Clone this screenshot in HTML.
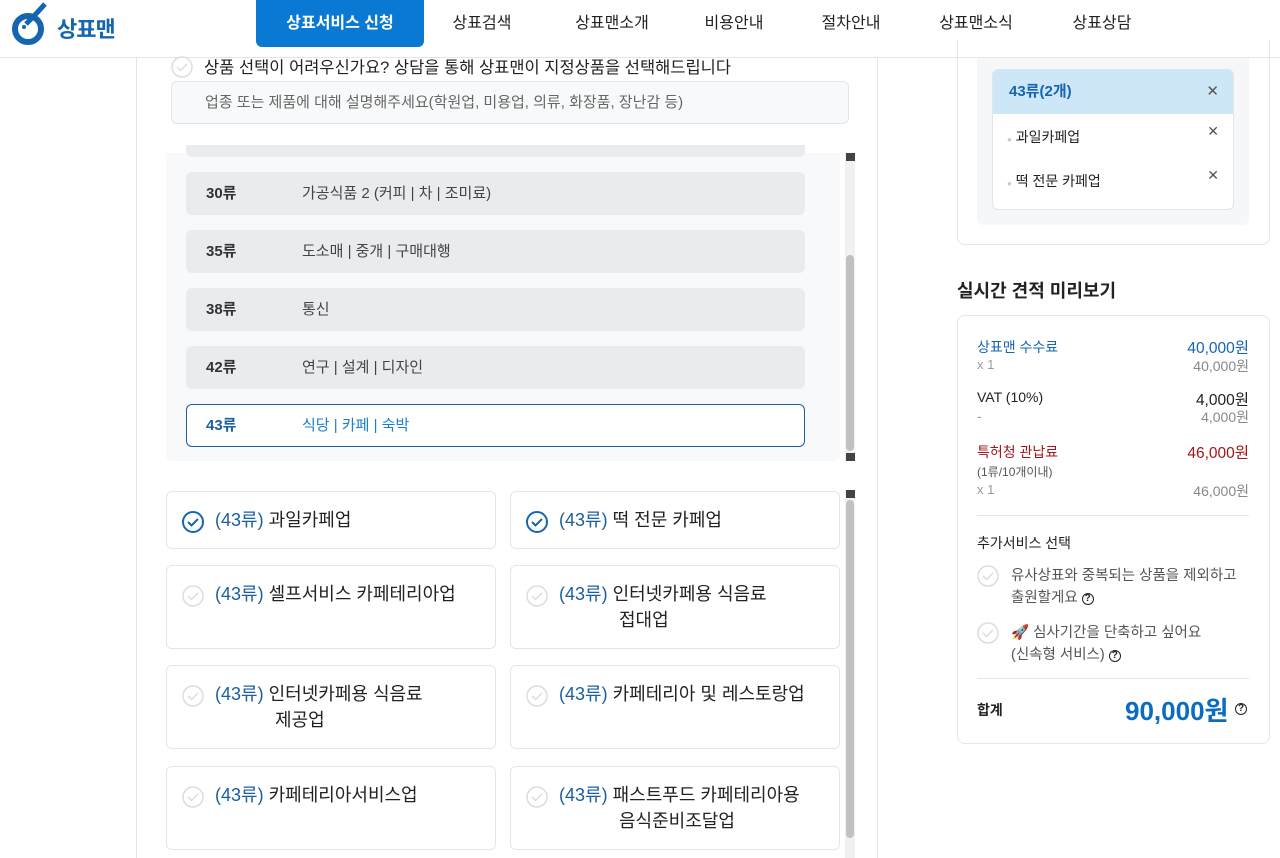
<!DOCTYPE html>
<html><head><meta charset="utf-8"><style>
*{margin:0;padding:0;box-sizing:border-box}
body{width:1280px;height:858px;overflow:hidden;background:#fff;font-family:"Liberation Sans","Noto Sans CJK KR",sans-serif;color:#222;position:relative}
.a{position:absolute}
.hdr{left:0;top:0;width:1280px;height:58px;border-bottom:1px solid #e6e6e6;background:#fff}
.nav{top:0;height:47px;line-height:47px;font-size:16px;color:#222;text-align:center}
.row{left:186px;width:619px;height:43px;border-radius:6px;background:#e9ebee;font-size:15px;line-height:43px}
.row .n{position:absolute;left:20px;font-weight:bold;color:#333}
.row .t{position:absolute;left:116px;color:#444}
.card{width:330px;border:1px solid #e3e5e8;border-radius:6px;background:#fff;font-size:18px;line-height:26px}
.card .ic{position:absolute;left:14px;top:18px}
.card .tx{position:absolute;left:48px;top:15px;padding-left:60px;text-indent:-60px;width:270px}
.card .c{color:#1b5fa0}
.sb{width:10px;background:#f1f1f1}
.th{background:#c1c1c1;border-radius:5px}
.pr{font-size:14px}
.q{font-size:10px;border:1.5px solid #222;border-radius:50%;display:inline-block;width:12px;height:12px;line-height:9px;text-align:center;color:#222;font-weight:bold;vertical-align:1px}
</style></head><body>
<div class="a hdr"></div>
<svg class="a" style="left:12px;top:2px" width="36" height="44" viewBox="0 0 36 44">
<circle cx="16" cy="27" r="13" fill="none" stroke="#1565b0" stroke-width="6"/>
<path d="M14 22 L22 14 L33 2" stroke="#1565b0" stroke-width="5" fill="none"/>
<circle cx="12" cy="25" r="2" fill="#1565b0"/>
</svg>
<div class="a" style="left:57px;top:12px;font-size:22px;font-weight:bold;color:#1565b0;letter-spacing:-1px">상표맨</div>
<div class="a nav" style="left:256px;width:168px;background:#0a79d4;color:#fff;border-radius:0 0 6px 6px;font-weight:bold">상표서비스 신청</div>
<div class="a nav" style="left:431px;width:102px">상표검색</div>
<div class="a nav" style="left:560px;width:104px">상표맨소개</div>
<div class="a nav" style="left:690px;width:88px">비용안내</div>
<div class="a nav" style="left:806px;width:90px">절차안내</div>
<div class="a nav" style="left:931px;width:90px">상표맨소식</div>
<div class="a nav" style="left:1060px;width:84px">상표상담</div>

<div class="a" style="left:136px;top:58px;width:1px;height:800px;background:#e6e6e6"></div>
<div class="a" style="left:877px;top:58px;width:1px;height:800px;background:#e6e6e6"></div>

<svg class="a" style="left:171px;top:56px" width="22" height="22"><circle cx="11" cy="11" r="10" fill="none" stroke="#ddd" stroke-width="1.5"/><path d="M6 11l3.5 3.5L16 8" stroke="#ddd" stroke-width="1.5" fill="none"/></svg>
<div class="a" style="left:204px;top:54px;font-size:16.5px;color:#222">상품 선택이 어려우신가요? 상담을 통해 상표맨이 지정상품을 선택해드립니다</div>
<div class="a" style="left:171px;top:81px;width:678px;height:43px;border:1px solid #e3e5e8;border-radius:6px;background:#f8f9fa;font-size:15px;color:#666;line-height:41px;padding-left:33px">업종 또는 제품에 대해 설명해주세요(학원업, 미용업, 의류, 화장품, 장난감 등)</div>

<div class="a" style="left:166px;top:153px;width:674px;height:308px;background:#f8f9fa;border-radius:0 0 6px 6px"></div>
<div class="a" style="left:186px;top:145px;width:619px;height:12px;background:#e9ebee;border-radius:0 0 6px 6px"></div>
<div class="a row" style="top:172px"><span class="n">30류</span><span class="t">가공식품 2 (커피 | 차 | 조미료)</span></div>
<div class="a row" style="top:230px"><span class="n">35류</span><span class="t">도소매 | 중개 | 구매대행</span></div>
<div class="a row" style="top:288px"><span class="n">38류</span><span class="t">통신</span></div>
<div class="a row" style="top:346px"><span class="n">42류</span><span class="t">연구 | 설계 | 디자인</span></div>
<div class="a row" style="top:404px;background:#fff;border:1px solid #1b5fa0;line-height:41px"><span class="n" style="color:#1b5fa0;left:19px">43류</span><span class="t" style="color:#1b7fcf;left:115px">식당 | 카페 | 숙박</span></div>
<div class="a sb" style="left:845px;top:153px;height:308px"></div>
<div class="a" style="left:846px;top:153px;width:9px;height:8px;background:#444"></div>
<div class="a" style="left:846px;top:453px;width:9px;height:8px;background:#444"></div>
<div class="a th" style="left:846px;top:255px;width:8px;height:196px"></div>

<div class="a sb" style="left:845px;top:490px;height:368px"></div>
<div class="a" style="left:846px;top:490px;width:9px;height:8px;background:#444"></div>
<div class="a th" style="left:846px;top:500px;width:8px;height:338px"></div>

<div class="a card" style="left:166px;top:491px;height:58px"><svg class="ic" width="24" height="24"><circle cx="12" cy="12" r="10" fill="none" stroke="#1565b0" stroke-width="2"/><path d="M7 12l3.5 3.5L17 9" stroke="#1565b0" stroke-width="2" fill="none"/></svg><div class="tx"><span class="c">(43류)</span> 과일카페업</div></div>
<div class="a card" style="left:510px;top:491px;height:58px"><svg class="ic" width="24" height="24"><circle cx="12" cy="12" r="10" fill="none" stroke="#1565b0" stroke-width="2"/><path d="M7 12l3.5 3.5L17 9" stroke="#1565b0" stroke-width="2" fill="none"/></svg><div class="tx"><span class="c">(43류)</span> 떡 전문 카페업</div></div>
<div class="a card" style="left:166px;top:565px;height:84px"><svg class="ic" width="24" height="24"><circle cx="12" cy="12" r="10" fill="none" stroke="#ddd" stroke-width="1.5"/><path d="M7 12l3.5 3.5L17 9" stroke="#ddd" stroke-width="1.5" fill="none"/></svg><div class="tx"><span class="c">(43류)</span> 셀프서비스 카페테리아업</div></div>
<div class="a card" style="left:510px;top:565px;height:84px"><svg class="ic" width="24" height="24"><circle cx="12" cy="12" r="10" fill="none" stroke="#ddd" stroke-width="1.5"/><path d="M7 12l3.5 3.5L17 9" stroke="#ddd" stroke-width="1.5" fill="none"/></svg><div class="tx"><span class="c">(43류)</span> 인터넷카페용 식음료<br>접대업</div></div>
<div class="a card" style="left:166px;top:665px;height:84px"><svg class="ic" width="24" height="24"><circle cx="12" cy="12" r="10" fill="none" stroke="#ddd" stroke-width="1.5"/><path d="M7 12l3.5 3.5L17 9" stroke="#ddd" stroke-width="1.5" fill="none"/></svg><div class="tx"><span class="c">(43류)</span> 인터넷카페용 식음료<br>제공업</div></div>
<div class="a card" style="left:510px;top:665px;height:84px"><svg class="ic" width="24" height="24"><circle cx="12" cy="12" r="10" fill="none" stroke="#ddd" stroke-width="1.5"/><path d="M7 12l3.5 3.5L17 9" stroke="#ddd" stroke-width="1.5" fill="none"/></svg><div class="tx"><span class="c">(43류)</span> 카페테리아 및 레스토랑업</div></div>
<div class="a card" style="left:166px;top:766px;height:84px"><svg class="ic" width="24" height="24"><circle cx="12" cy="12" r="10" fill="none" stroke="#ddd" stroke-width="1.5"/><path d="M7 12l3.5 3.5L17 9" stroke="#ddd" stroke-width="1.5" fill="none"/></svg><div class="tx"><span class="c">(43류)</span> 카페테리아서비스업</div></div>
<div class="a card" style="left:510px;top:766px;height:84px"><svg class="ic" width="24" height="24"><circle cx="12" cy="12" r="10" fill="none" stroke="#ddd" stroke-width="1.5"/><path d="M7 12l3.5 3.5L17 9" stroke="#ddd" stroke-width="1.5" fill="none"/></svg><div class="tx"><span class="c">(43류)</span> 패스트푸드 카페테리아용<br>음식준비조달업</div></div>

<div class="a" style="left:957px;top:40px;width:313px;height:205px;border:1px solid #e6e6e6;border-top:none;border-radius:0 0 8px 8px"></div>
<div class="a" style="left:977px;top:58px;width:272px;height:167px;background:#f5f7f9;border-radius:0 0 6px 6px"></div>
<div class="a" style="left:992px;top:69px;width:242px;height:141px;background:#fff;border:1px solid #e3e5e8;border-radius:6px;overflow:hidden">
<div style="height:44px;background:#cde6f8;line-height:44px;padding-left:16px;font-weight:bold;color:#1565b0;font-size:15px;position:relative">43류(2개)<span style="position:absolute;right:14px;color:#555;font-weight:normal">✕</span></div>
<div style="height:44px;line-height:46px;padding-left:14px;font-size:14px;position:relative"><span style="color:#bcd;font-size:8px">●</span> 과일카페업<span style="position:absolute;right:14px;top:-6px;color:#555">✕</span></div>
<div style="height:44px;line-height:46px;padding-left:14px;font-size:14px;position:relative"><span style="color:#bcd;font-size:8px">●</span> 떡 전문 카페업<span style="position:absolute;right:14px;top:-6px;color:#555">✕</span></div>
</div>
<div class="a" style="left:957px;top:277px;font-size:18px;font-weight:bold;color:#222">실시간 견적 미리보기</div>
<div class="a" style="left:957px;top:315px;width:313px;height:429px;border:1px solid #e6e6e6;border-radius:8px"></div>
<div class="a pr" style="left:977px;top:337px;color:#1565b0">상표맨 수수료</div>
<div class="a pr" style="right:31px;top:336px;color:#1565b0;font-size:15.5px">40,000원</div>
<div class="a pr" style="left:977px;top:357px;color:#999;font-size:13px">x 1</div>
<div class="a pr" style="right:31px;top:356px;color:#888">40,000원</div>
<div class="a pr" style="left:977px;top:389px">VAT (10%)</div>
<div class="a pr" style="right:31px;top:388px;font-size:15.5px">4,000원</div>
<div class="a pr" style="left:977px;top:408px;color:#999">-</div>
<div class="a pr" style="right:31px;top:407px;color:#888">4,000원</div>
<div class="a pr" style="left:977px;top:442px;color:#a3151b">특허청 관납료</div>
<div class="a pr" style="right:31px;top:441px;color:#a3151b;font-size:15.5px">46,000원</div>
<div class="a pr" style="left:977px;top:463px;color:#555;font-size:12px">(1류/10개이내)</div>
<div class="a pr" style="left:977px;top:482px;color:#999;font-size:13px">x 1</div>
<div class="a pr" style="right:31px;top:481px;color:#888">46,000원</div>
<div class="a" style="left:977px;top:515px;width:272px;height:1px;background:#e6e6e6"></div>
<div class="a pr" style="left:977px;top:533px">추가서비스 선택</div>
<svg class="a" style="left:977px;top:565px" width="22" height="22"><circle cx="11" cy="11" r="10" fill="none" stroke="#ddd" stroke-width="1.5"/><path d="M6 11l3.5 3.5L16 8" stroke="#ddd" stroke-width="1.5" fill="none"/></svg>
<div class="a pr" style="left:1011px;top:565px;color:#555;line-height:22px;font-size:14.5px">유사상표와 중복되는 상품을 제외하고<br>출원할게요 <span class="q">?</span></div>
<svg class="a" style="left:977px;top:622px" width="22" height="22"><circle cx="11" cy="11" r="10" fill="none" stroke="#ddd" stroke-width="1.5"/><path d="M6 11l3.5 3.5L16 8" stroke="#ddd" stroke-width="1.5" fill="none"/></svg>
<div class="a pr" style="left:1011px;top:622px;color:#555;line-height:22px;font-size:14.5px"><span style="color:#2a7fd0">🚀</span> 심사기간을 단축하고 싶어요<br>(신속형 서비스) <span class="q">?</span></div>
<div class="a" style="left:977px;top:678px;width:272px;height:1px;background:#e6e6e6"></div>
<div class="a pr" style="left:977px;top:700px;font-weight:bold">합계</div>
<div class="a" style="left:1125px;top:691px;font-size:26px;font-weight:bold;color:#0a6cc0">90,000원</div>
<div class="a q" style="left:1235px;top:703px">?</div>
</body></html>
